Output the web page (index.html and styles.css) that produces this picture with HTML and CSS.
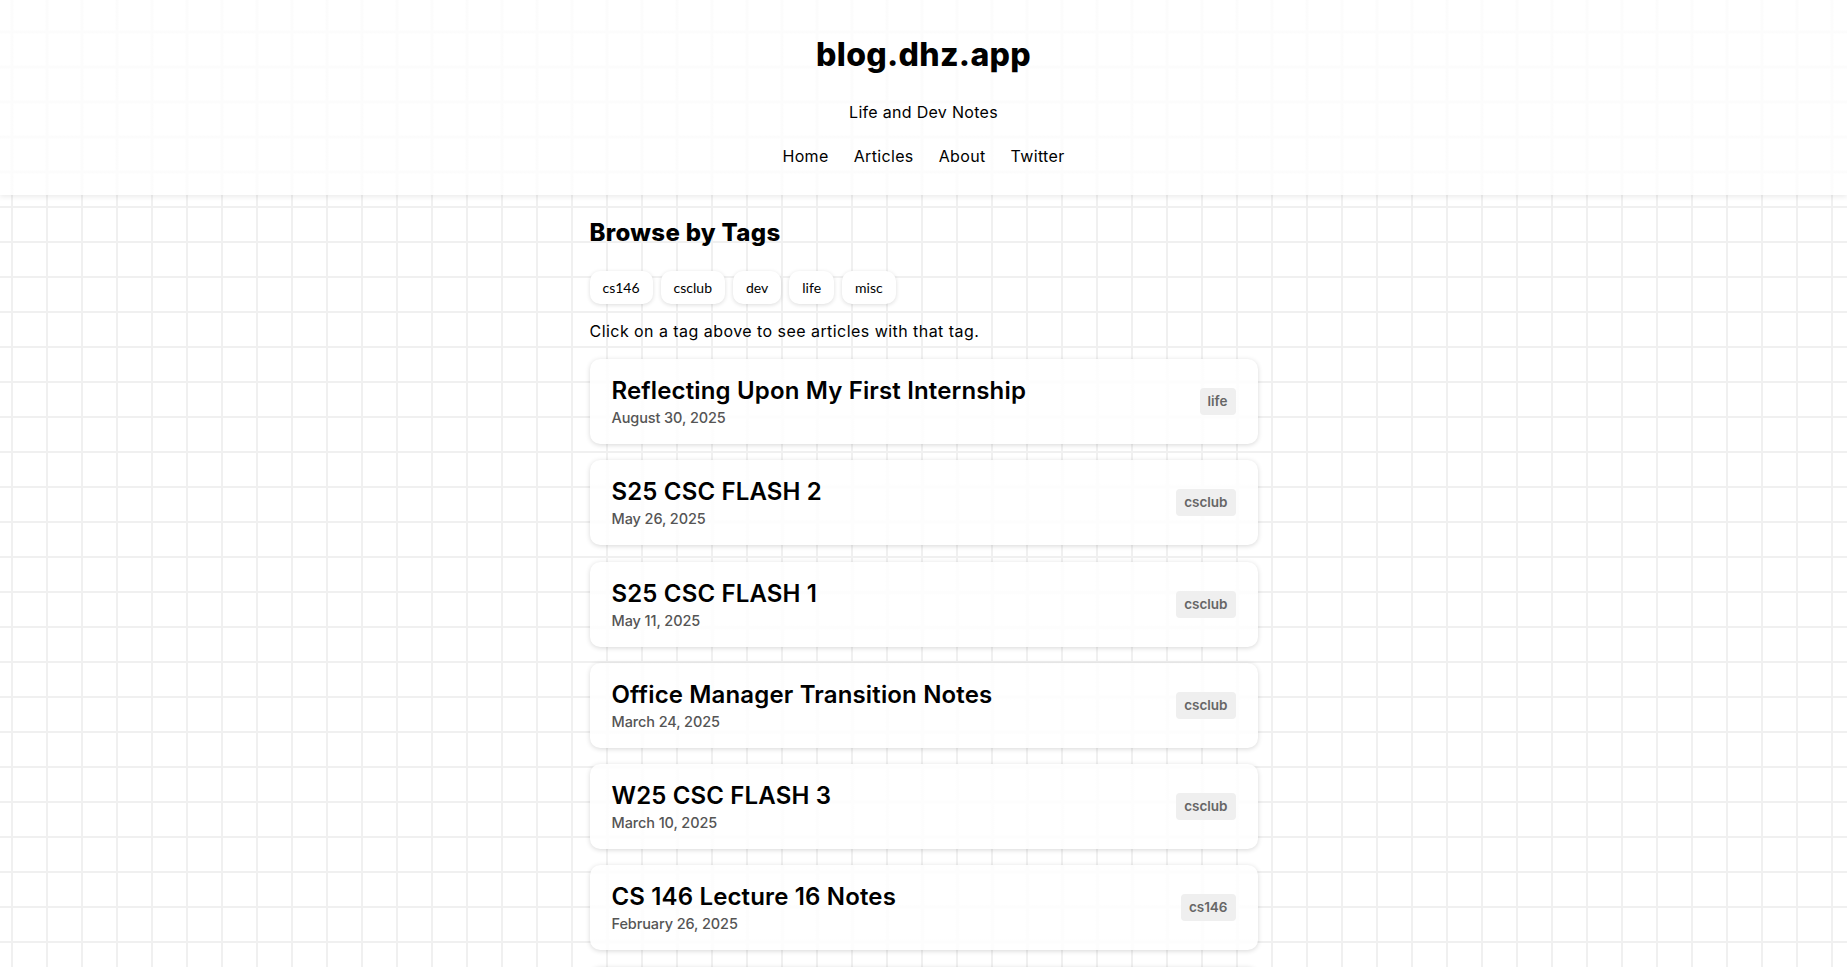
FILE: index.html
```html
<!DOCTYPE html>
<html lang="en">
<head>
<meta charset="utf-8">
<title>blog.dhz.app</title>
<link rel="stylesheet" href="styles.css">
</head>
<body>
<header class="site-header">
  <h1 class="site-title">blog.dhz.app</h1>
  <p class="site-subtitle">Life and Dev Notes</p>
  <nav class="site-nav">
    <a href="#">Home</a>
    <a href="#">Articles</a>
    <a href="#">About</a>
    <a href="#">Twitter</a>
  </nav>
</header>
<main class="content">
  <h2 class="section-title">Browse by Tags</h2>
  <div class="tag-list">
    <button class="tag-btn">cs146</button>
    <button class="tag-btn">csclub</button>
    <button class="tag-btn">dev</button>
    <button class="tag-btn">life</button>
    <button class="tag-btn">misc</button>
  </div>
  <p class="hint">Click on a tag above to see articles with that tag.</p>
  <div class="posts">
    <a class="post-card" href="#">
      <div class="post-info"><h3 class="post-title">Reflecting Upon My First Internship</h3><div class="post-date">August 30, 2025</div></div>
      <span class="post-tag">life</span>
    </a>
    <a class="post-card" href="#">
      <div class="post-info"><h3 class="post-title">S25 CSC FLASH 2</h3><div class="post-date">May 26, 2025</div></div>
      <span class="post-tag">csclub</span>
    </a>
    <a class="post-card" href="#">
      <div class="post-info"><h3 class="post-title">S25 CSC FLASH 1</h3><div class="post-date">May 11, 2025</div></div>
      <span class="post-tag">csclub</span>
    </a>
    <a class="post-card" href="#">
      <div class="post-info"><h3 class="post-title">Office Manager Transition Notes</h3><div class="post-date">March 24, 2025</div></div>
      <span class="post-tag">csclub</span>
    </a>
    <a class="post-card" href="#">
      <div class="post-info"><h3 class="post-title">W25 CSC FLASH 3</h3><div class="post-date">March 10, 2025</div></div>
      <span class="post-tag">csclub</span>
    </a>
    <a class="post-card" href="#">
      <div class="post-info"><h3 class="post-title">CS 146 Lecture 16 Notes</h3><div class="post-date">February 26, 2025</div></div>
      <span class="post-tag">cs146</span>
    </a>
    <a class="post-card" href="#">
      <div class="post-info"><h3 class="post-title">CS 146 Lecture 15 Notes</h3><div class="post-date">February 24, 2025</div></div>
      <span class="post-tag">cs146</span>
    </a>
  </div>
</main>
</body>
</html>
```
FILE: styles.css
```css
html, body {
  margin: 0;
  padding: 0;
}
body {
  font-family: "Inter", "Open Sans", sans-serif;
  color: #000;
  background-color: #fff;
  background-image:
    linear-gradient(to right, #f0f0f0 0, #f0f0f0 2px, transparent 2px),
    linear-gradient(to bottom, #f0f0f0 0, #f0f0f0 2px, transparent 2px);
  background-size: 35px 35px;
  background-position: 11px 31px;
  min-height: 967px;
}
.site-header {
  position: sticky;
  top: 0;
  z-index: 10;
  height: 195px;
  box-sizing: border-box;
  padding-top: 36px;
  text-align: center;
  background-color: #fff;
  background-image:
    linear-gradient(rgba(255, 255, 255, 0.72), rgba(255, 255, 255, 0.72)),
    linear-gradient(to right, transparent 0, #f6f6f6 1px, #f3f3f3 2px, #f6f6f6 3px, transparent 4px),
    linear-gradient(to bottom, transparent 0, #f6f6f6 1px, #f3f3f3 2px, #f6f6f6 3px, transparent 4px);
  background-size: 100% 100%, 35px 35px, 35px 35px;
  background-position: 0 0, 10px 30px, 10px 30px;
  box-shadow: 0 2px 5px rgba(0, 0, 0, 0.08);
}
.site-title {
  margin: 0;
  font-size: 32px;
  line-height: 38px;
  font-weight: 800;
  letter-spacing: 0.3px;
}
.site-subtitle {
  margin: 26px 0 0;
  font-size: 16px;
  line-height: 24px;
  font-weight: 400;
  letter-spacing: 0.3px;
}
.site-nav {
  margin-top: 20px;
  display: flex;
  justify-content: center;
  gap: 25px;
}
.site-nav a {
  color: #000;
  text-decoration: none;
  font-size: 16px;
  line-height: 24px;
  font-weight: 400;
  letter-spacing: 0.35px;
}
.content {
  width: 668px;
  margin: 0 auto;
  padding-top: 22px;
}
.section-title {
  margin: 0;
  font-size: 24px;
  line-height: 32px;
  font-weight: 800;
  letter-spacing: 0.3px;
}
.tag-list {
  margin-top: 22px;
  display: flex;
  gap: 8px;
}
.tag-btn {
  height: 33px;
  padding: 0 13px;
  border: none;
  border-radius: 10px;
  background: #fff;
  box-shadow: 0 1px 4px rgba(0, 0, 0, 0.14);
  font-family: "Lato", "Liberation Sans", sans-serif;
  font-size: 14px;
  color: #000;
}
.hint {
  margin: 15px 0 0;
  font-size: 16px;
  line-height: 24px;
  letter-spacing: 0.45px;
}
.posts {
  margin-top: 16px;
  display: flex;
  flex-direction: column;
  gap: 16.25px;
}
.post-card {
  display: flex;
  align-items: center;
  justify-content: space-between;
  height: 85px;
  box-sizing: border-box;
  padding: 16px 22px 16px;
  border-radius: 10px;
  background-color: #fff;
  background-image:
    linear-gradient(rgba(255, 255, 255, 0.8), rgba(255, 255, 255, 0.8)),
    linear-gradient(to right, transparent 0, #f6f6f6 1px, #f3f3f3 2px, #f6f6f6 3px, transparent 4px),
    linear-gradient(to bottom, transparent 0, #f6f6f6 1px, #f3f3f3 2px, #f6f6f6 3px, transparent 4px);
  background-size: 100% 100%, 35px 35px, 35px 35px;
  background-position: 0 0, 10px 30px, 10px 30px;
  background-attachment: scroll, fixed, fixed;
  box-shadow: 0 1px 5px rgba(0, 0, 0, 0.16);
  color: #000;
  text-decoration: none;
}
.post-title {
  margin: 0;
  font-size: 24px;
  line-height: 32px;
  font-weight: 600;
  letter-spacing: 0.15px;
}
.post-date {
  margin-top: 1px;
  font-size: 14.5px;
  line-height: 20px;
  font-weight: 500;
  color: #555;
  letter-spacing: -0.1px;
}
.post-tag {
  padding: 0 8px;
  height: 27px;
  line-height: 27px;
  border-radius: 4px;
  background: #efefef;
  color: #666;
  font-size: 13.5px;
  font-weight: 600;
}
```
